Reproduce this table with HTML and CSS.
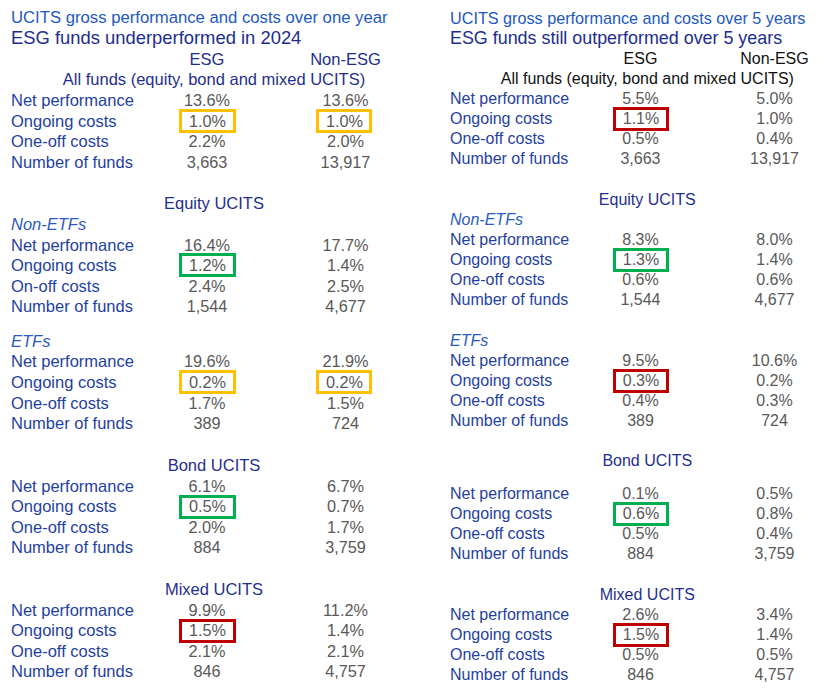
FILE: index.html
```html
<!DOCTYPE html>
<html lang="en">
<head>
<meta charset="utf-8">
<title>UCITS gross performance and costs</title>
<link rel="stylesheet" href="styles.css">
</head>
<body>
<div class="page">
  <section class="panel left">
    <div class="t1">UCITS gross performance and costs over one year</div>
    <div class="t2">ESG funds underperformed in 2024</div>
    <div class="grid colhead"><span class="lbl"></span><span class="v">ESG</span><span class="v n">Non-ESG</span></div>
    <div class="heading">All funds (equity, bond and mixed UCITS)</div>
    <div class="grid">
      <span class="lbl">Net performance</span><span class="v">13.6%</span><span class="v n">13.6%</span>
      <span class="lbl">Ongoing costs</span><span class="v"><span class="box gold">1.0%</span></span><span class="v n"><span class="box gold narrow">1.0%</span></span>
      <span class="lbl">One-off costs</span><span class="v">2.2%</span><span class="v n">2.0%</span>
      <span class="lbl">Number of funds</span><span class="v">3,663</span><span class="v n">13,917</span>
    </div>
    <div class="heading gap-equity">Equity UCITS</div>
    <div class="sub">Non-ETFs</div>
    <div class="grid">
      <span class="lbl">Net performance</span><span class="v">16.4%</span><span class="v n">17.7%</span>
      <span class="lbl">Ongoing costs</span><span class="v"><span class="box green">1.2%</span></span><span class="v n">1.4%</span>
      <span class="lbl">On-off costs</span><span class="v">2.4%</span><span class="v n">2.5%</span>
      <span class="lbl">Number of funds</span><span class="v">1,544</span><span class="v n">4,677</span>
    </div>
    <div class="sub gap-etf">ETFs</div>
    <div class="grid">
      <span class="lbl">Net performance</span><span class="v">19.6%</span><span class="v n">21.9%</span>
      <span class="lbl">Ongoing costs</span><span class="v"><span class="box gold">0.2%</span></span><span class="v n"><span class="box gold narrow">0.2%</span></span>
      <span class="lbl">One-off costs</span><span class="v">1.7%</span><span class="v n">1.5%</span>
      <span class="lbl">Number of funds</span><span class="v">389</span><span class="v n">724</span>
    </div>
    <div class="heading gap-bond">Bond UCITS</div>
    <div class="grid gap-bondrows">
      <span class="lbl">Net performance</span><span class="v">6.1%</span><span class="v n">6.7%</span>
      <span class="lbl">Ongoing costs</span><span class="v"><span class="box green">0.5%</span></span><span class="v n">0.7%</span>
      <span class="lbl">One-off costs</span><span class="v">2.0%</span><span class="v n">1.7%</span>
      <span class="lbl">Number of funds</span><span class="v">884</span><span class="v n">3,759</span>
    </div>
    <div class="heading gap-mixed">Mixed UCITS</div>
    <div class="grid">
      <span class="lbl">Net performance</span><span class="v">9.9%</span><span class="v n">11.2%</span>
      <span class="lbl">Ongoing costs</span><span class="v"><span class="box red">1.5%</span></span><span class="v n">1.4%</span>
      <span class="lbl">One-off costs</span><span class="v">2.1%</span><span class="v n">2.1%</span>
      <span class="lbl">Number of funds</span><span class="v">846</span><span class="v n">4,757</span>
    </div>
  </section>

  <section class="panel right">
    <div class="t1">UCITS gross performance and costs over 5 years</div>
    <div class="t2">ESG funds still outperformed over 5 years</div>
    <div class="grid colhead"><span class="lbl"></span><span class="v">ESG</span><span class="v n">Non-ESG</span></div>
    <div class="heading">All funds (equity, bond and mixed UCITS)</div>
    <div class="grid">
      <span class="lbl">Net performance</span><span class="v">5.5%</span><span class="v n">5.0%</span>
      <span class="lbl">Ongoing costs</span><span class="v"><span class="box red">1.1%</span></span><span class="v n">1.0%</span>
      <span class="lbl">One-off costs</span><span class="v">0.5%</span><span class="v n">0.4%</span>
      <span class="lbl">Number of funds</span><span class="v">3,663</span><span class="v n">13,917</span>
    </div>
    <div class="heading gap-equity">Equity UCITS</div>
    <div class="sub">Non-ETFs</div>
    <div class="grid">
      <span class="lbl">Net performance</span><span class="v">8.3%</span><span class="v n">8.0%</span>
      <span class="lbl">Ongoing costs</span><span class="v"><span class="box green">1.3%</span></span><span class="v n">1.4%</span>
      <span class="lbl">One-off costs</span><span class="v">0.6%</span><span class="v n">0.6%</span>
      <span class="lbl">Number of funds</span><span class="v">1,544</span><span class="v n">4,677</span>
    </div>
    <div class="sub gap-etf">ETFs</div>
    <div class="grid">
      <span class="lbl">Net performance</span><span class="v">9.5%</span><span class="v n">10.6%</span>
      <span class="lbl">Ongoing costs</span><span class="v"><span class="box red">0.3%</span></span><span class="v n">0.2%</span>
      <span class="lbl">One-off costs</span><span class="v">0.4%</span><span class="v n">0.3%</span>
      <span class="lbl">Number of funds</span><span class="v">389</span><span class="v n">724</span>
    </div>
    <div class="heading gap-bond">Bond UCITS</div>
    <div class="grid gap-bondrows">
      <span class="lbl">Net performance</span><span class="v">0.1%</span><span class="v n">0.5%</span>
      <span class="lbl">Ongoing costs</span><span class="v"><span class="box green">0.6%</span></span><span class="v n">0.8%</span>
      <span class="lbl">One-off costs</span><span class="v">0.5%</span><span class="v n">0.4%</span>
      <span class="lbl">Number of funds</span><span class="v">884</span><span class="v n">3,759</span>
    </div>
    <div class="heading gap-mixed">Mixed UCITS</div>
    <div class="grid">
      <span class="lbl">Net performance</span><span class="v">2.6%</span><span class="v n">3.4%</span>
      <span class="lbl">Ongoing costs</span><span class="v"><span class="box red">1.5%</span></span><span class="v n">1.4%</span>
      <span class="lbl">One-off costs</span><span class="v">0.5%</span><span class="v n">0.5%</span>
      <span class="lbl">Number of funds</span><span class="v">846</span><span class="v n">4,757</span>
    </div>
  </section>
</div>
</body>
</html>
```

FILE: styles.css
```css
html, body {
  margin: 0;
  padding: 0;
  background: #ffffff;
  overflow: hidden;
}

body {
  font-family: "Liberation Sans", Arial, sans-serif;
}

.page {
  display: flex;
  width: 836px;
  height: 693px;
}

.panel {
  box-sizing: border-box;
  display: flex;
  flex-direction: column;
  line-height: var(--lh);
  font-size: var(--fs);
}

.left {
  --lh: 20.6px;
  --fs: 16.5px;
  --vfs: 16.3px;
  --t1: 16.7px;
  --t2: 18.4px;
  --cols: 167px 58px 80px 59px;
  --hpad: 0px;
  --boxw: 57px;
  width: 450px;
  padding: 7.7px 33px 0 11px;
}

.right {
  --lh: 20px;
  --fs: 16px;
  --vfs: 16px;
  --t1: 16.2px;
  --t2: 17.9px;
  --cols: 162px 57px 77px 57px;
  --hpad: 8.6px;
  --boxw: 56px;
  flex: 1;
  padding: 7.6px 0 0 0;
}

.t1 {
  font-size: var(--t1);
  color: #2158c2;
  white-space: nowrap;
}

.t2 {
  font-size: var(--t2);
  color: #1c2d8e;
  white-space: nowrap;
}

.grid {
  display: grid;
  grid-template-columns: var(--cols);
  grid-auto-rows: var(--lh);
}

.lbl {
  grid-column: 1;
  color: #1f3fa3;
  white-space: nowrap;
}

.v {
  grid-column: 2;
  display: flex;
  justify-content: center;
  align-items: center;
  white-space: nowrap;
  color: #595959;
  font-size: var(--vfs);
}

.v.n {
  grid-column: 4;
}

.colhead .v {
  color: #1c2d8e;
  font-size: var(--fs);
}

.right .colhead {
  margin-top: 1.6px;
}

.right .colhead .v {
  color: #111111;
}

.heading {
  text-align: center;
  padding-left: var(--hpad);
  color: #1f2f8f;
  white-space: nowrap;
}

.right .colhead + .heading {
  color: #111111;
}

.sub {
  font-style: italic;
  color: #2a5ac2;
}

.box {
  box-sizing: border-box;
  display: flex;
  align-items: center;
  justify-content: center;
  width: var(--boxw);
  height: 24px;
  flex: none;
  border: 3px solid;
  padding-left: 1px;
}

.box.narrow {
  width: 56px;
  margin-right: 3px;
}

.gold { border-color: #ffc000; }
.green { border-color: #00b050; }
.red { border-color: #c00000; }

.left .gap-equity { margin-top: 20.9px; }
.left .gap-etf { margin-top: 14px; }
.left .gap-bond { margin-top: 21.2px; }
.left .gap-mixed { margin-top: 21px; }

.right .gap-equity { margin-top: 20.9px; }
.right .gap-etf { margin-top: 21px; }
.right .gap-bond { margin-top: 19.8px; }
.right .gap-bondrows { margin-top: 13.3px; }
.right .gap-mixed { margin-top: 21px; }
```
